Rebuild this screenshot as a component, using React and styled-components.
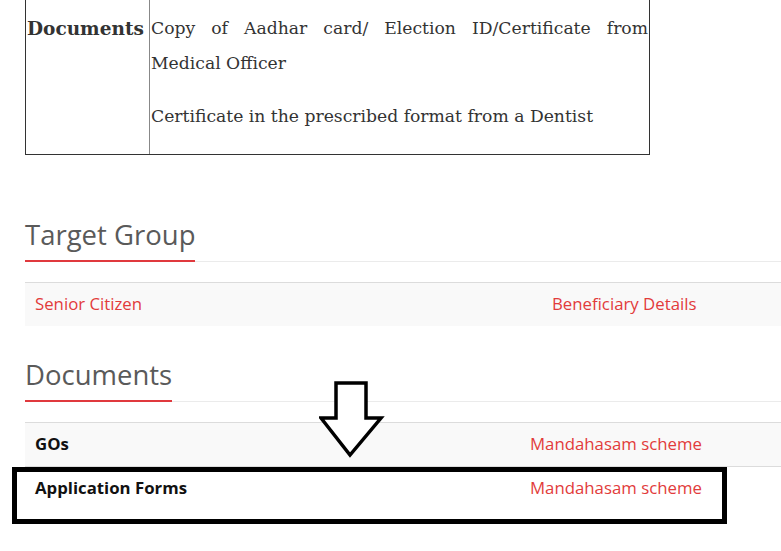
import React from "react";
import styled, { createGlobalStyle } from "styled-components";

const GlobalStyle = createGlobalStyle`
  html, body {
    margin: 0;
    padding: 0;
    background: #fff;
    overflow: hidden;
  }
`;

const targetRows = [{ left: "Senior Citizen", right: "Beneficiary Details", red: true }];
const docRows = [
  { left: "GOs", right: "Mandahasam scheme" },
  { left: "Application Forms", right: "Mandahasam scheme" },
];

const App = () => {
  return (
    <S.Page>
      <GlobalStyle />
      <S.InfoTable>
        <S.Label>Documents</S.Label>
        <S.Cell>
          <S.Para $justify>Copy of Aadhar card/ Election ID/Certificate from Medical Officer</S.Para>
          <S.Para>Certificate in the prescribed format from a Dentist</S.Para>
        </S.Cell>
      </S.InfoTable>

      <S.Section $top={63}>
        <S.Heading>
          <S.HeadingText>Target Group</S.HeadingText>
        </S.Heading>
        <S.List>
          {targetRows.map((r, i) => (
            <S.Row key={i} $cols="517px 1fr" $odd={i % 2 === 0}>
              <S.Item $red={r.red}>{r.left}</S.Item>
              <S.Item $red>{r.right}</S.Item>
            </S.Row>
          ))}
        </S.List>
      </S.Section>

      <S.Section $top={32}>
        <S.Heading>
          <S.HeadingText>Documents</S.HeadingText>
        </S.Heading>
        <S.List>
          {docRows.map((r, i) => (
            <S.Row key={i} $cols="495px 1fr" $odd={i % 2 === 0}>
              <S.Item $bold>{r.left}</S.Item>
              <S.Item $red>{r.right}</S.Item>
            </S.Row>
          ))}
        </S.List>
      </S.Section>

      <S.Arrow width="66" height="80" viewBox="0 0 66 80">
        <path
          d="M17 2 H47 V37 H62 L31 74 L2 37 H17 Z"
          fill="#fff"
          stroke="#000"
          strokeWidth="3.5"
          strokeLinejoin="miter"
        />
      </S.Arrow>
      <S.Highlight />
    </S.Page>
  );
};

const S = {
  Page: styled.div`
    position: relative;
    width: 781px;
    height: 551px;
    overflow: hidden;
  `,
  InfoTable: styled.div`
    display: grid;
    grid-template-columns: 124px 1fr;
    width: 623px;
    margin-left: 25px;
    border: 1px solid #333;
    border-top: none;
    font-family: "DejaVu Serif", Georgia, serif;
    color: #333;
  `,
  Label: styled.div`
    padding: 11px 1px 0 1px;
    font-size: 18.5px;
    line-height: 35px;
    font-weight: bold;
    border-right: 1px solid #888;
  `,
  Cell: styled.div`
    padding: 11px 1px 2px 1px;
  `,
  Para: styled.p`
    margin: 0 0 18px;
    font-size: 17.2px;
    line-height: 35px;
    text-align: ${({ $justify }) => ($justify ? "justify" : "left")};
  `,
  Section: styled.div`
    margin-top: ${({ $top }) => $top}px;
    margin-left: 25px;
    font-family: "Open Sans", "Noto Sans", sans-serif;
  `,
  Heading: styled.h2`
    display: flex;
    margin: 0;
    border-bottom: 1px solid #ebebeb;
    font-size: 27.5px;
    line-height: 34px;
    font-weight: 400;
    color: #5a5a5a;
  `,
  HeadingText: styled.span`
    position: relative;
    padding-bottom: 8px;
    margin-bottom: -1px;
    border-bottom: 2px solid #e0393e;
  `,
  List: styled.div`
    margin-top: 20px;
  `,
  Row: styled.div`
    display: grid;
    grid-template-columns: ${({ $cols }) => $cols};
    border-top: 1px solid #dcdcdc;
    background: ${({ $odd }) => ($odd ? "#f9f9f9" : "#fff")};
  `,
  Item: styled.div`
    padding: 9px 10px 10px;
    font-size: 16.8px;
    line-height: 24px;
    font-weight: ${({ $bold }) => ($bold ? 700 : 400)};
    color: ${({ $red }) => ($red ? "#e23b3b" : "#111")};
  `,
  Arrow: styled.svg`
    position: absolute;
    left: 319px;
    top: 381px;
  `,
  Highlight: styled.div`
    position: absolute;
    left: 12px;
    top: 467px;
    width: 705px;
    height: 47px;
    border: 5px solid #000;
  `,
};

export default App;
